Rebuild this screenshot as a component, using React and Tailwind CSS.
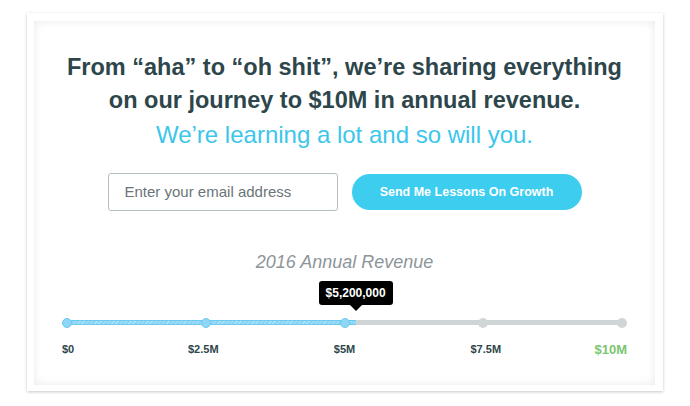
import React from "react";

const TRACK_W = 565;
const VALUE = 5200000;
const MAX = 10000000;

export default function App() {
  const font = { fontFamily: '"Liberation Sans", Arial, Helvetica, sans-serif' };
  const fillPx = 5 + (TRACK_W - 10) * (VALUE / MAX);
  const dots = [true, true, true, false, false];
  const labels = ["$2.5M", "$5M", "$7.5M"];
  return (
    <div className="w-[690px] h-[406px] bg-white pt-[13px] pl-[27px]" style={font}>
      <div className="w-[636px] h-[378px] bg-white pt-[8px] pl-[7px] pr-[8px] pb-[6px] shadow-[0_1px_3px_rgba(0,0,0,0.22)]">
        <div className="h-full bg-white shadow-[inset_0_0_10px_rgba(0,0,0,0.09)] flex flex-col items-center pt-[30px]">
          <h1 className="text-[23.5px] leading-[33px] font-bold text-[#2d464b] text-center whitespace-nowrap">
            From “aha” to “oh shit”, we’re sharing everything
            <br />
            on our journey to $10M in annual revenue.
          </h1>
          <p className="mt-[4px] text-[24px] leading-[28px] text-[#3cc6ec] whitespace-nowrap">
            We’re learning a lot and so will you.
          </p>
          <div className="mt-[24px] flex items-center gap-[14px]">
            <div className="w-[230px] h-[38px] border border-[#b3bec2] rounded-[3px] flex items-center pl-[16px] text-[15px] text-[#6b7579]">
              Enter your email address
            </div>
            <div className="w-[230px] h-[36px] rounded-full bg-[#3ccdef] flex items-center justify-center text-white font-bold text-[12.5px]">
              Send Me Lessons On Growth
            </div>
          </div>
          <p className="mt-[41px] text-[18px] leading-[20px] italic text-[#8c9599]">2016 Annual Revenue</p>
          <div className="w-[565px] mt-[9px] flex flex-col">
            <div className="relative h-[39px]">
              <div
                className="absolute top-0 w-[74px] h-[24px] -translate-x-1/2 bg-black rounded-[3px] flex items-center justify-center text-white font-bold text-[12px]"
                style={{ left: fillPx }}
              >
                $5,200,000
                <div className="absolute left-1/2 -translate-x-1/2 top-[24px] w-0 h-0 border-l-[6px] border-r-[6px] border-t-[6px] border-l-transparent border-r-transparent border-t-black" />
              </div>
            </div>
            <div className="relative h-[5px] mx-[5px] rounded-full bg-[#cfd4d6]">
              <div
                className="absolute left-0 inset-y-0 rounded-l-full bg-[#8ad5f5] border-y border-[#6fcaf0]"
                style={{
                  width: fillPx - 5,
                  backgroundImage:
                    "repeating-linear-gradient(135deg, rgba(255,255,255,0.3) 0 1px, transparent 1px 3px)",
                }}
              />
              <div className="absolute -left-[5px] -right-[5px] top-1/2 -translate-y-1/2 flex justify-between">
                {dots.map((on, i) => (
                  <div
                    key={i}
                    className={
                      on
                        ? "w-[10px] h-[10px] rounded-full bg-[#8fd7f7] border border-[#6cc8ef]"
                        : "w-[10px] h-[10px] rounded-full bg-[#d0d5d7]"
                    }
                  />
                ))}
              </div>
            </div>
            <div className="mt-[18px] flex justify-between items-center font-bold text-[11px] leading-[13px] text-[#2d464b]">
              <div className="w-0 flex justify-start">
                <span className="whitespace-nowrap">$0</span>
              </div>
              {labels.map((l) => (
                <div key={l} className="w-0 flex justify-center">
                  <span className="whitespace-nowrap">{l}</span>
                </div>
              ))}
              <div className="w-0 flex justify-end">
                <span className="whitespace-nowrap text-[13px] text-[#7cc66f]">$10M</span>
              </div>
            </div>
          </div>
        </div>
      </div>
    </div>
  );
}
